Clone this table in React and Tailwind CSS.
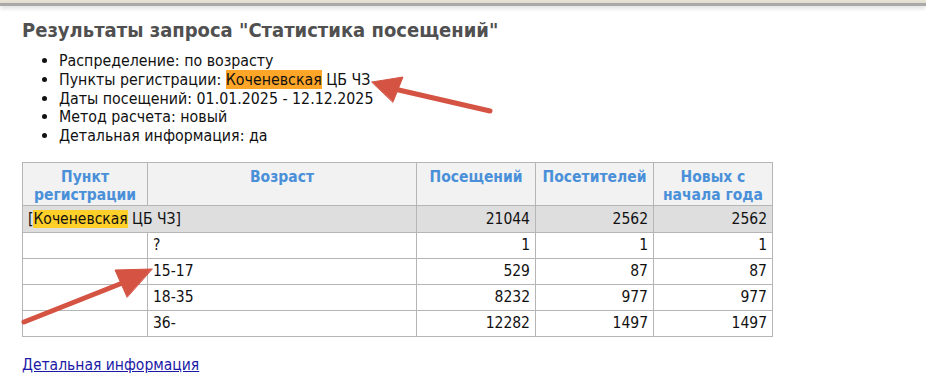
import React from "react";

const font = { fontFamily: '"DejaVu Sans Condensed", "DejaVu Sans", sans-serif' };

function Arrows() {
  return (
    <svg className="absolute left-0 top-0 pointer-events-none" width="926" height="380" viewBox="0 0 926 380">
      <g fill="#d45343" stroke="#d45343" strokeLinecap="round" strokeLinejoin="round">
        <line x1="490" y1="111" x2="390" y2="88" strokeWidth="5" />
        <polygon points="372,82 403,77 393,102" strokeWidth="1" />
        <line x1="24" y1="322" x2="130" y2="280" strokeWidth="5" />
        <polygon points="152,269 115,270 127,297" strokeWidth="1" />
      </g>
    </svg>
  );
}

export default function App() {
  const rows = [
    ["?", "1", "1", "1"],
    ["15-17", "529", "87", "87"],
    ["18-35", "8232", "977", "977"],
    ["36-", "12282", "1497", "1497"],
  ];
  return (
    <div className="relative w-[926px] h-[380px] bg-white overflow-hidden text-[#111]" style={font}>
      <div className="h-[3px] bg-[#e6e2d4]" />
      <div className="h-[3px] bg-[#a9a9a9] shadow-[0_2px_4px_rgba(0,0,0,0.18)]" />
      <div className="pl-[22px]">
        <h1 className="mt-[12px] text-[20px] leading-[24px] font-bold text-[#505050]">
          Результаты запроса "Статистика посещений"
        </h1>
        <ul className="mt-[10px] pl-[37px] list-disc text-[15.8px] leading-[18.75px]">
          <li>Распределение: по возрасту</li>
          <li>
            Пункты регистрации: <span className="bg-[#ffa628]">Коченевская</span> ЦБ ЧЗ
          </li>
          <li>Даты посещений: 01.01.2025 - 12.12.2025</li>
          <li>Метод расчета: новый</li>
          <li>Детальная информация: да</li>
        </ul>
        <table className="mt-[16px] border-collapse text-[15.5px] leading-[18px]">
          <thead>
            <tr className="bg-[#f2f2f2] text-[#4a90d9] font-bold align-top">
              <th className="w-[125px] h-[43px] border border-[#b5b5b5] pt-[5px] font-bold">Пункт<br />регистрации</th>
              <th className="w-[269px] border border-[#b5b5b5] pt-[5px] font-bold">Возраст</th>
              <th className="w-[119px] border border-[#b5b5b5] pt-[5px] font-bold">Посещений</th>
              <th className="w-[118px] border border-[#b5b5b5] pt-[5px] font-bold">Посетителей</th>
              <th className="w-[119px] border border-[#b5b5b5] pt-[5px] font-bold">Новых с<br />начала года</th>
            </tr>
          </thead>
          <tbody>
            <tr className="bg-[#dedede] h-[27px]">
              <td colSpan={2} className="border border-[#b5b5b5] px-[5px]">
                [<span className="bg-[#ffcf2a]">Коченевская</span> ЦБ ЧЗ]
              </td>
              <td className="border border-[#b5b5b5] px-[5px] text-right">21044</td>
              <td className="border border-[#b5b5b5] px-[5px] text-right">2562</td>
              <td className="border border-[#b5b5b5] px-[5px] text-right">2562</td>
            </tr>
            {rows.map((r) => (
              <tr key={r[0]} className="h-[26px]">
                <td className="border border-[#b5b5b5]" />
                <td className="border border-[#b5b5b5] px-[5px]">{r[0]}</td>
                <td className="border border-[#b5b5b5] px-[5px] text-right">{r[1]}</td>
                <td className="border border-[#b5b5b5] px-[5px] text-right">{r[2]}</td>
                <td className="border border-[#b5b5b5] px-[5px] text-right">{r[3]}</td>
              </tr>
            ))}
          </tbody>
        </table>
        <a href="#" className="block mt-[19px] text-[15.5px] leading-[18px] text-[#1a1aa6] underline">
          Детальная информация
        </a>
      </div>
      <Arrows />
    </div>
  );
}
